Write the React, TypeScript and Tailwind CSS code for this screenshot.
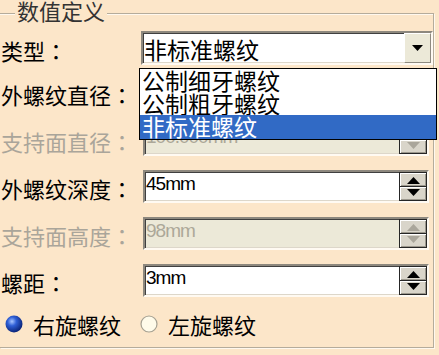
const cjk = "font-['Noto_Sans_CJK_SC','Noto_Sans',sans-serif]";
const num = "font-['Liberation_Sans',sans-serif]";

function Spinner({ disabled }: { disabled?: boolean }) {
  const c = disabled ? "#aaa69b" : "#000000";
  return (
    <div className="flex h-full w-[28px] flex-col border border-[#262626] bg-[#d9d5ca]">
      <div className="flex flex-1 items-end justify-center border-b border-[#262626] pb-[2px] shadow-[inset_1px_1px_0_#ffffff,inset_-1px_-1px_0_#9c988d]">
        <svg width="13" height="7" viewBox="0 0 13 7">
          <path d="M6.5 0 L13 7 L0 7 Z" fill={c} />
        </svg>
      </div>
      <div className="flex flex-1 items-start justify-center pt-[2px] shadow-[inset_1px_1px_0_#ffffff,inset_-1px_-1px_0_#9c988d]">
        <svg width="13" height="7" viewBox="0 0 13 7">
          <path d="M0 0 L13 0 L6.5 7 Z" fill={c} />
        </svg>
      </div>
    </div>
  );
}

function Field({ value, disabled }: { value: string; disabled?: boolean }) {
  return (
    <div
      className={`ml-[2px] flex h-[33px] w-[286px] border-2 border-t-[#8d887e] border-l-[#8d887e] border-r-[#fffaf2] border-b-[#fffaf2] shadow-[inset_1px_1px_0_#404040,inset_-1px_-1px_0_#ddd7ca] ${
        disabled ? "bg-[#ece9d8]" : "bg-white"
      }`}
    >
      <span
        className={`flex-1 pl-[1px] pt-[2px] text-[19px] leading-[20px] tracking-[-1px] ${num} ${
          disabled ? "text-[#aca899]" : "text-black"
        }`}
      >
        {value}
      </span>
      <Spinner disabled={disabled} />
    </div>
  );
}

function Label({ text, disabled }: { text: string; disabled?: boolean }) {
  return (
    <div
      className={`w-[141px] pl-[1px] pt-[3px] text-[22px] leading-[26px] ${cjk} ${
        disabled ? "text-[#aaa59a]" : "text-black"
      }`}
    >
      {text}
      <span className="font-['Noto_Sans_CJK_JP',sans-serif]">：</span>
    </div>
  );
}

const options = ["公制细牙螺纹", "公制粗牙螺纹", "非标准螺纹"];

export default function App() {
  return (
    <div className="h-[355px] w-[439px] overflow-hidden bg-[#fce6c9] pt-[13px]">
      <div className="relative h-[335px] w-[434px] border border-l-0 border-[#b5ac9b] shadow-[1px_1px_0_#fff8ee,inset_0_1px_0_#fff8ee]">
        <span
          className={`absolute left-[15px] top-[-14px] bg-[#fce6c9] px-[2px] text-[22px] leading-[21px] text-[#333333] ${cjk}`}
        >
          数值定义
        </span>

        <div className="flex flex-col">
          {/* 类型 */}
          <div className="mt-[17px] flex h-[34px] items-center">
            <Label text="类型" />
            <div className="relative flex h-[34px] w-[292px] border-2 border-t-[#8d887e] border-l-[#8d887e] border-r-[#fffaf2] border-b-[#fffaf2] bg-white shadow-[inset_1px_1px_0_#404040,inset_-1px_-1px_0_#ddd7ca]">
              <span className={`flex-1 pl-[1px] pt-[3px] text-[23px] leading-[27px] text-black ${cjk}`}>
                非标准螺纹
              </span>
              <div className="flex w-[27px] items-center justify-center border border-t-[#ffffff] border-l-[#ffffff] border-r-[#8e8a80] border-b-[#8e8a80] bg-[#ece9d8]">
                <svg width="11" height="6" viewBox="0 0 11 6">
                  <path d="M0 0 L11 0 L5.5 6 Z" fill="#000000" />
                </svg>
              </div>

              <div className="absolute left-[-4px] top-[35px] z-10 flex h-[72px] w-[298px] flex-col border border-black bg-white">
                {options.map((o, i) => (
                  <div
                    key={o}
                    className={`pl-[2px] text-[23px] leading-[23px] ${cjk} ${
                      i === 2 ? "h-[24px] bg-[#316ac5] text-white" : "h-[23px] text-black"
                    }`}
                  >
                    {o}
                  </div>
                ))}
              </div>
            </div>
          </div>

          <div className="mt-[11px] flex h-[33px] items-center">
            <Label text="外螺纹直径" />
            <Field value="50mm" />
          </div>

          <div className="mt-[14px] flex h-[33px] items-center">
            <Label text="支持面直径" disabled />
            <Field value="100.000mm" disabled />
          </div>

          <div className="mt-[14px] flex h-[33px] items-center">
            <Label text="外螺纹深度" />
            <Field value="45mm" />
          </div>

          <div className="mt-[14px] flex h-[33px] items-center">
            <Label text="支持面高度" disabled />
            <Field value="98mm" disabled />
          </div>

          <div className="mt-[14px] flex h-[33px] items-center">
            <Label text="螺距" />
            <Field value="3mm" />
          </div>

          {/* 旋向 */}
          <div className={`mt-[15px] flex h-[24px] items-center pl-[5px] text-[22px] leading-[24px] text-black ${cjk}`}>
            <svg width="18" height="18" viewBox="0 0 18 18">
              <defs>
                <radialGradient id="rb" cx="38%" cy="35%" r="65%">
                  <stop offset="0" stopColor="#a9c6ff" />
                  <stop offset="0.4" stopColor="#2f5fd6" />
                  <stop offset="1" stopColor="#0b257a" />
                </radialGradient>
              </defs>
              <circle cx="9" cy="9" r="8.5" fill="url(#rb)" />
            </svg>
            <span className="ml-[10px]">右旋螺纹</span>
            <svg className="ml-[19px]" width="18" height="18" viewBox="0 0 18 18">
              <circle cx="9" cy="9" r="8" fill="#fffbea" stroke="#a6a192" strokeWidth="1.2" />
            </svg>
            <span className="ml-[10px]">左旋螺纹</span>
          </div>
        </div>
      </div>
    </div>
  );
}
